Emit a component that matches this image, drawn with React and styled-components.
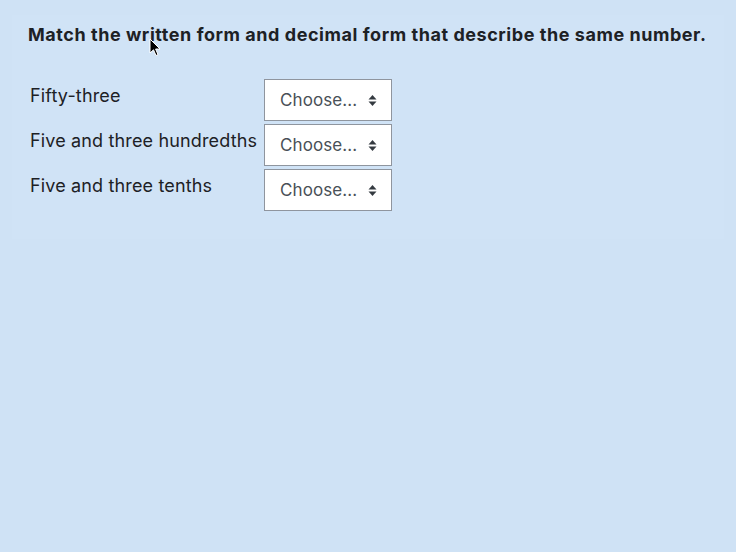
import styled, { createGlobalStyle } from "styled-components";

const GlobalStyle = createGlobalStyle`
    html, body {
        margin: 0;
        padding: 0;
        background: #cfe2f5;
    }
    body {
        font-family: Inter, "Noto Sans", sans-serif;
        color: #1d2125;
    }
`

const Page = styled.div`
    width: 736px;
    height: 552px;
    padding: 15px 12px 0;
    box-sizing: border-box;
    position: relative;
    overflow: hidden;
`

const Panel = styled.div`
    background: #d0e3f6;
    padding: 8px 16px 28px 16px;
`

const Question = styled.div`
    font-weight: 700;
    font-size: 18px;
    line-height: 24px;
    letter-spacing: 0.55px;
    color: #1d2125;
    margin-bottom: 32px;
`

const Rows = styled.div`
    display: grid;
    grid-template-columns: 236px auto;
    row-gap: 3px;
    justify-content: start;
`

const Label = styled.div`
    font-size: 18px;
    line-height: 24px;
    letter-spacing: 0.15px;
    padding: 5px 0 0 2px;
    color: #1d2125;
    white-space: nowrap;
`

const SelectBox = styled.div`
    width: 128px;
    height: 42px;
    box-sizing: border-box;
    background: #ffffff;
    border: 1px solid #8f959e;
    display: flex;
    align-items: center;
    justify-content: space-between;
    padding: 0 14px 1px 15px;
    font-size: 17px;
    letter-spacing: 0.1px;
    color: #495057;
`

const Arrows = styled.svg`
    width: 9px;
    height: 13px;
    margin-top: 1px;
`

const Cursor = styled.svg`
    position: absolute;
    left: 149px;
    top: 38px;
    width: 12px;
    height: 19px;
`

const items = ["Fifty-three", "Five and three hundredths", "Five and three tenths"];

const App = () => {
    return (
        <Page>
            <GlobalStyle />
            <Panel>
                <Question>Match the written form and decimal form that describe the same number.</Question>
                <Rows>
                    {items.map((text) => (
                        <>
                            <Label key={text + "l"}>{text}</Label>
                            <SelectBox key={text + "s"}>
                                <span>Choose...</span>
                                <Arrows viewBox="0 0 9 13">
                                    <path d="M4.5 1 L8.5 5.5 L0.5 5.5 Z" fill="#343a40" />
                                    <path d="M4.5 12 L8.5 7.5 L0.5 7.5 Z" fill="#343a40" />
                                </Arrows>
                            </SelectBox>
                        </>
                    ))}
                </Rows>
            </Panel>
            <Cursor viewBox="0 0 12 19">
                <path d="M1 1 L1 15 L4.5 11.8 L7 17.5 L9 16.6 L6.6 11 L11 11 Z" fill="#000" stroke="#fff" strokeWidth="1" />
            </Cursor>
        </Page>
    )
}

export default App;
